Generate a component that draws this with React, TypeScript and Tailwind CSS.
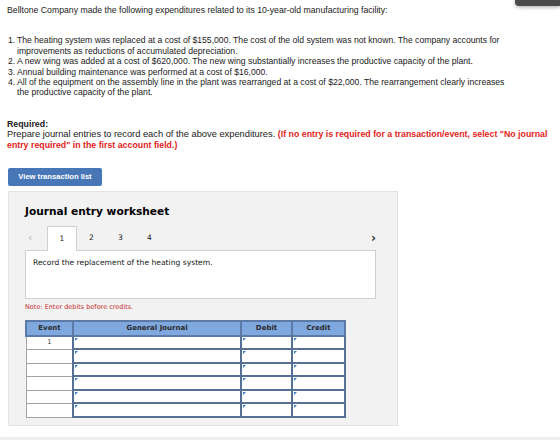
import React from "react";

const sans = { fontFamily: '"Liberation Sans", Arial, sans-serif' };
const verdana = { fontFamily: '"DejaVu Sans", Verdana, sans-serif' };

function Marker() {
  return (
    <span className="absolute left-[1px] top-[1px] h-0 w-0 border-t-[3px] border-r-[3px] border-t-[#3a7bd5] border-r-transparent" />
  );
}

function InputCell() {
  return (
    <td className="relative border-2 border-[#566f95] bg-white p-0">
      <Marker />
    </td>
  );
}

export default function App() {
  const rows = [0, 1, 2, 3, 4, 5];
  return (
    <div className="relative h-[440px] w-[560px] overflow-hidden bg-white text-[#1a1a1a]">
      {/* floating toolbar tab in the corner */}
      <div className="absolute right-0 top-0 h-[6px] w-[45px] rounded-bl-[4px] bg-[#4b4b4b] shadow-[0_1px_4px_rgba(0,0,0,0.35)]" />

      <div className="px-[7px] pt-[5px] leading-[10.4px]" style={sans}>
        <p className="whitespace-nowrap text-[8.7px]">
          Belltone Company made the following expenditures related to its 10-year-old manufacturing facility:
        </p>

        <ol className="mt-[20px] whitespace-nowrap text-[8.65px]">
          <li className="flex">
            <span className="w-[10px] pl-[1px]">1.</span>
            <span>
              <span className="block">
                The heating system was replaced at a cost of $155,000. The cost of the old system was not known. The company accounts for
              </span>
              <span className="block">improvements as reductions of accumulated depreciation.</span>
            </span>
          </li>
          <li className="flex">
            <span className="w-[10px] pl-[1px]">2.</span>
            <span>
              A new wing was added at a cost of $620,000. The new wing substantially increases the productive capacity of the plant.
            </span>
          </li>
          <li className="flex">
            <span className="w-[10px] pl-[1px]">3.</span>
            <span>Annual building maintenance was performed at a cost of $16,000.</span>
          </li>
          <li className="flex">
            <span className="w-[10px] pl-[1px]">4.</span>
            <span>
              <span className="block">
                All of the equipment on the assembly line in the plant was rearranged at a cost of $22,000. The rearrangement clearly increases
              </span>
              <span className="block">the productive capacity of the plant.</span>
            </span>
          </li>
        </ol>

        <div className="mt-[21px] whitespace-nowrap">
          <p className="text-[8.8px] font-bold">Required:</p>
          <p className="text-[9.3px]">
            Prepare journal entries to record each of the above expenditures.{" "}
            <span className="text-[8.8px] font-bold text-[#e3231c]">
              (If no entry is required for a transaction/event, select "No journal
            </span>
          </p>
          <p className="text-[8.8px] font-bold text-[#e3231c]">entry required" in the first account field.)</p>
        </div>
      </div>

      <div className="ml-[8px] mt-[18px] flex flex-col">
        <button
          className="h-[18px] w-[94px] rounded-[2px] bg-[#4877b8] text-[7.6px] font-bold text-white"
          style={sans}
        >
          View transaction list
        </button>

        <div
          className="mt-[5px] h-[235px] w-[390px] border border-[#e2e2e2] bg-[#f2f2f2] pl-[16px] pt-[12px]"
          style={verdana}
        >
          <h2 className="text-[10.6px] font-bold leading-[14px] text-black">Journal entry worksheet</h2>

          <div className="mt-[8px] flex h-[24px] w-[351px] items-center text-[7.5px]">
            <span className="w-[22px] pl-[3px] text-[11px] text-[#b5b5b5]">‹</span>
            <span className="relative z-10 flex h-[25px] w-[30px] items-center justify-center self-start border border-b-0 border-[#cfcfcf] bg-white">
              1
            </span>
            <span className="w-[29px] text-center">2</span>
            <span className="w-[29px] text-center">3</span>
            <span className="w-[29px] text-center">4</span>
            <span className="ml-auto text-[12px] font-bold text-[#333]">›</span>
          </div>

          <div className="h-[49px] w-[351px] border border-[#cfcfcf] bg-white px-[7px] pt-[7px] text-[7.6px] leading-[10px]">
            Record the replacement of the heating system.
          </div>

          <p className="mt-[4px] text-[6.5px] leading-[9px] text-[#c62a2a]">Note: Enter debits before credits.</p>

          <table className="mt-[8px] w-[319px] table-fixed border-collapse text-[7px]">
            <colgroup>
              <col className="w-[47px]" />
              <col className="w-[168px]" />
              <col className="w-[51px]" />
              <col className="w-[53px]" />
            </colgroup>
            <thead>
              <tr className="h-[15px]">
                {["Event", "General Journal", "Debit", "Credit"].map((h) => (
                  <th
                    key={h}
                    className="border-2 border-[#5b7aa6] bg-[#7fa8de] p-0 text-center font-bold text-[#2b2b2b]"
                  >
                    {h}
                  </th>
                ))}
              </tr>
            </thead>
            <tbody>
              {rows.map((r) => (
                <tr key={r} className={r % 2 === 0 ? "h-[13px]" : "h-[14px]"}>
                  <td className="border border-[#a3a3a3] bg-white p-0 text-center text-[6.5px] text-[#333]">
                    {r === 0 ? "1" : ""}
                  </td>
                  <InputCell />
                  <InputCell />
                  <InputCell />
                </tr>
              ))}
            </tbody>
          </table>
        </div>
      </div>

      <div className="absolute bottom-0 left-0 h-[3px] w-full bg-[#efefef]" />
    </div>
  );
}
